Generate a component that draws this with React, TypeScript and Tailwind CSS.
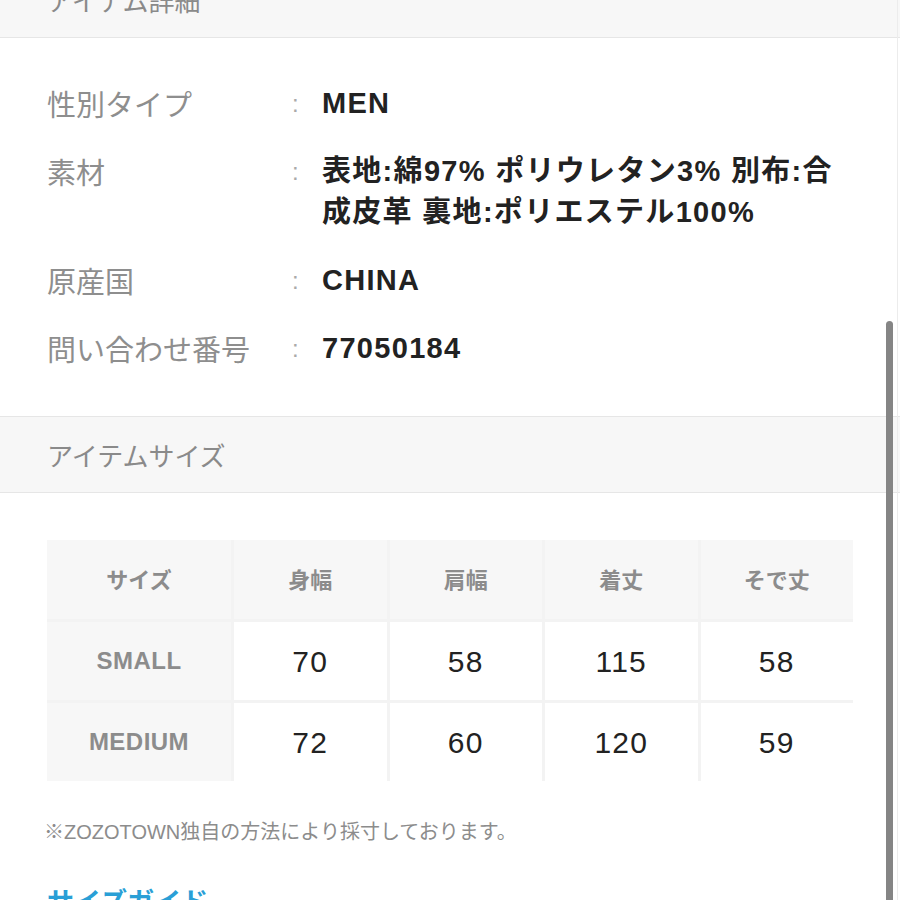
import React from "react";

const font = { fontFamily: '"Liberation Sans", "Noto Sans CJK JP", sans-serif' };

const rows: { label: string; value: React.ReactNode }[] = [
  { label: "性別タイプ", value: "MEN" },
  {
    label: "素材",
    value: (
      <>
        表地:綿97% ポリウレタン3% 別布:合
        <br />
        成皮革 裏地:ポリエステル100%
      </>
    ),
  },
  { label: "原産国", value: "CHINA" },
  { label: "問い合わせ番号", value: "77050184" },
];

const heads = ["サイズ", "身幅", "肩幅", "着丈", "そで丈"];
const data = [
  ["SMALL", "70", "58", "115", "58"],
  ["MEDIUM", "72", "60", "120", "59"],
];

export default function App() {
  return (
    <div
      className="relative w-[900px] h-[900px] overflow-hidden bg-white"
      style={font}
    >
      {/* top band (scrolled) */}
      <div className="-mt-[39px] h-[77px] bg-[#f7f7f7] border-b border-[#e6e6e6] flex items-center pl-[47px]">
        <span className="text-[26px] text-[#8a8a8a] font-['Noto_Sans_CJK_JP']">アイテム詳細</span>
      </div>

      {/* details */}
      <div className="pt-[45px] pb-[47px] flex flex-col gap-[27px]">
        {rows.map((r) => (
          <div key={r.label} className="flex items-start leading-[41px]">
            <div className="w-[292px] shrink-0 pl-[47px] text-[29px] text-[#8e8e8e] font-['Noto_Sans_CJK_JP'] whitespace-nowrap">
              {r.label}
            </div>
            <div className="w-[30px] shrink-0 text-[24px] text-[#aaaaaa]">:</div>
            <div className="flex-1 text-[29px] font-semibold text-[#222222] tracking-[0.045em] whitespace-nowrap">
              {r.value}
            </div>
          </div>
        ))}
      </div>

      {/* size band */}
      <div className="h-[77px] bg-[#f7f7f7] border-y border-[#e6e6e6] flex items-center pl-[47px]">
        <span className="text-[26px] text-[#8a8a8a] font-['Noto_Sans_CJK_JP']">アイテムサイズ</span>
      </div>

      {/* table */}
      <div className="mt-[47px] ml-[47px] w-[806px] bg-[#f3f3f3] grid grid-cols-[184px_1fr_1fr_1fr_1fr] gap-[3px]">
        {heads.map((h) => (
          <div
            key={h}
            className="h-[79px] bg-[#f7f7f7] flex items-center justify-center text-[22px] font-semibold text-[#8c8c8c] font-['Noto_Sans_CJK_JP'] pb-[3px]"
          >
            {h}
          </div>
        ))}
        {data.map((row) =>
          row.map((c, i) =>
            i === 0 ? (
              <div
                key={row[0] + i}
                className="h-[78px] bg-[#f7f7f7] flex items-center justify-center text-[24px] font-semibold text-[#8c8c8c] tracking-[0.02em]"
              >
                {c}
              </div>
            ) : (
              <div
                key={row[0] + i}
                className="h-[78px] bg-white flex items-center justify-center text-[30px] text-[#222222] tracking-[0.04em]"
              >
                {c}
              </div>
            )
          )
        )}
      </div>

      {/* note */}
      <div className="mt-[36px] pl-[44px] text-[20px] leading-[30px] text-[#8c8c8c]">
        ※ZOZOTOWN独自の方法により採寸しております。
      </div>

      {/* link */}
      <div className="mt-[36px] pl-[47px] text-[27px] leading-[36px] font-bold text-[#2a9fd6] font-['Noto_Sans_CJK_JP']">
        サイズガイド
      </div>

      {/* scrollbar */}
      <div className="absolute left-[886px] top-[321px] w-[7px] h-[600px] rounded-full bg-[#858585]" />
      <div className="absolute left-[897px] top-0 w-px h-[900px] bg-[#ececec]" />
    </div>
  );
}
